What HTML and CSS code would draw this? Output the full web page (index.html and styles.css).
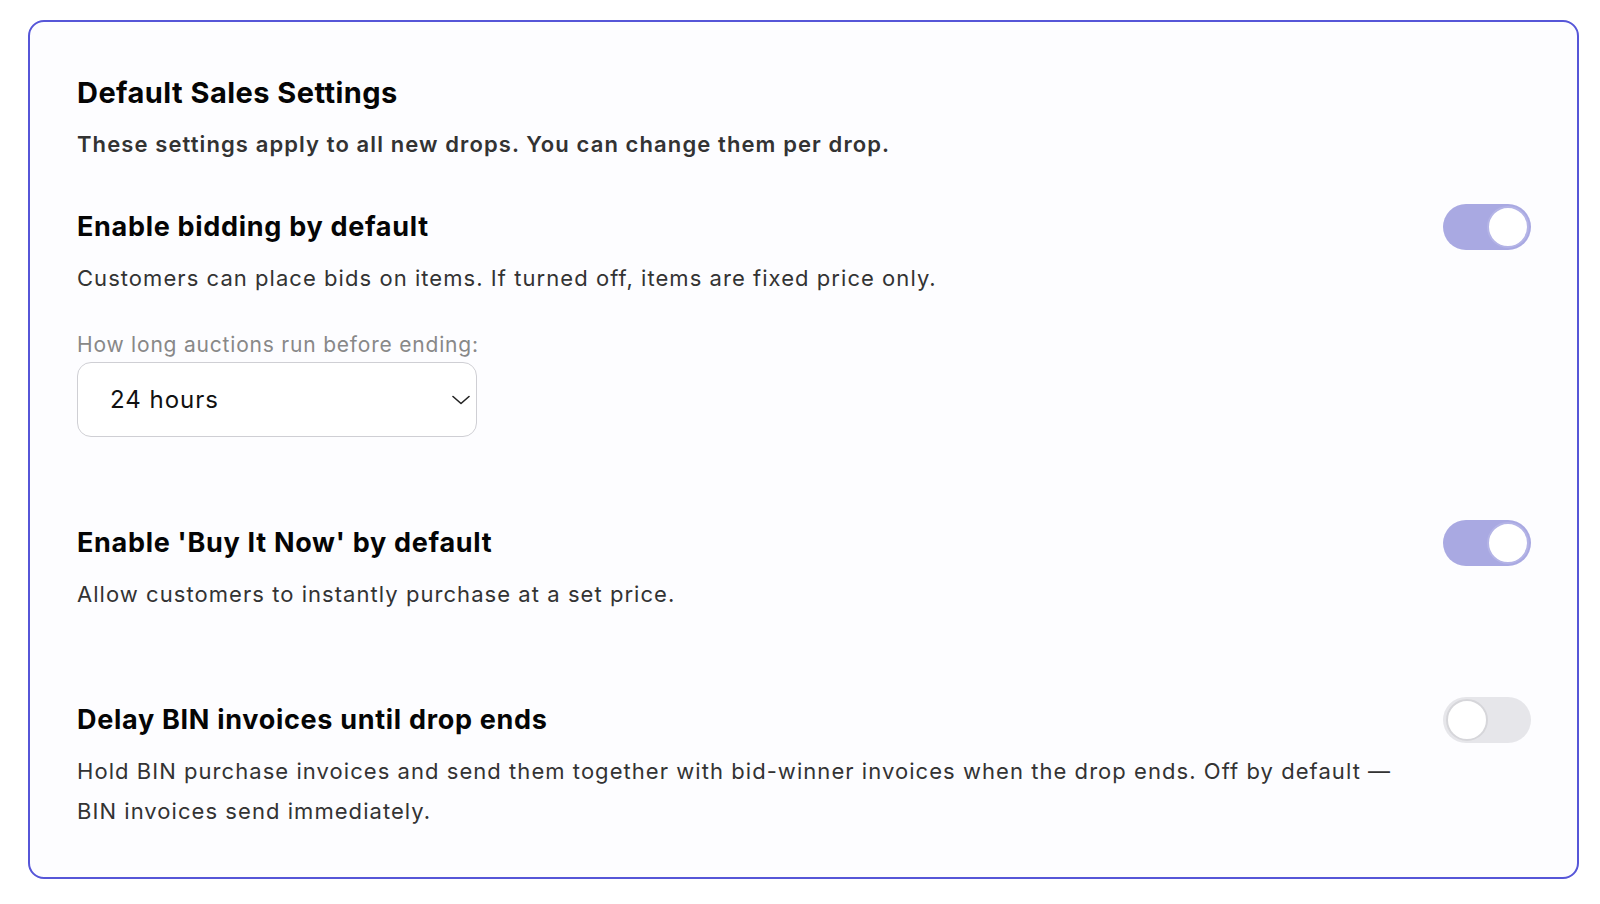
FILE: index.html
```html
<!DOCTYPE html>
<html>
<head>
    <title>Default Sales Settings</title>
    <link rel="stylesheet" href="styles.css">
</head>
<body>
    <div class="card">
        <h1>Default Sales Settings</h1>
        <p class="subtitle">These settings apply to all new drops. You can change them per drop.</p>

        <div class="setting first">
            <div class="setting-text">
                <h2>Enable bidding by default</h2>
                <p class="desc">Customers can place bids on items. If turned off, items are fixed price only.</p>

                <label class="field-label" for="duration">How long auctions run before ending:</label>
                <div class="select-wrap">
                    <select id="duration">
                        <option>12 hours</option>
                        <option selected>24 hours</option>
                        <option>48 hours</option>
                        <option>72 hours</option>
                    </select>
                    <svg class="chevron" width="18" height="10" viewBox="0 0 18 10">
                        <path d="M1 1.5 L9 8.5 L17 1.5" fill="none" stroke="#222" stroke-width="1.6" stroke-linecap="round" stroke-linejoin="round"/>
                    </svg>
                </div>
            </div>
            <div class="toggle on"><span class="knob"></span></div>
        </div>

        <div class="setting">
            <div class="setting-text">
                <h2>Enable 'Buy It Now' by default</h2>
                <p class="desc">Allow customers to instantly purchase at a set price.</p>
            </div>
            <div class="toggle on"><span class="knob"></span></div>
        </div>

        <div class="setting">
            <div class="setting-text">
                <h2>Delay BIN invoices until drop ends</h2>
                <p class="desc">Hold BIN purchase invoices and send them together with bid-winner invoices when the drop ends. Off by default — BIN invoices send immediately.</p>
            </div>
            <div class="toggle"><span class="knob"></span></div>
        </div>
    </div>
</body>
</html>
```

FILE: styles.css
```css
body {
    margin: 0;
    padding: 20px 21px 0 28px;
    background-color: #ffffff;
    font-family: Inter, Lato, sans-serif;
    color: #333;
}
.card {
    border: 2px solid #5656d8;
    border-radius: 16px;
    background-color: #fdfdff;
    padding: 53px 46px 46px 47px;
}
h1 {
    margin: 0;
    font-size: 29px;
    line-height: 36px;
    font-weight: 700;
    letter-spacing: 0.45px;
    color: #050505;
}
.subtitle {
    margin: 15px 0 0;
    font-size: 22px;
    line-height: 36px;
    font-weight: 600;
    letter-spacing: 1.1px;
    color: #333;
}
.setting {
    display: flex;
    align-items: flex-start;
    gap: 25px;
    margin-top: 88px;
}
.setting.first {
    margin-top: 47px;
}
.setting-text {
    flex: 1;
}
h2 {
    margin: 0;
    font-size: 27px;
    line-height: 36px;
    font-weight: 700;
    letter-spacing: 0.7px;
    color: #050505;
}
.desc {
    margin: 13px 0 0;
    font-size: 22px;
    line-height: 40px;
    letter-spacing: 1.05px;
    color: #333;
}
.field-label {
    display: block;
    margin-top: 32px;
    font-size: 21px;
    line-height: 30px;
    letter-spacing: 0.8px;
    color: #888;
}
.select-wrap {
    position: relative;
    width: 400px;
    margin-top: 2px;
}
select {
    appearance: none;
    -webkit-appearance: none;
    width: 100%;
    height: 75px;
    padding: 0 50px 0 32px;
    border: 1.5px solid #cfcfd4;
    border-radius: 14px;
    background-color: #fff;
    font-family: inherit;
    font-size: 24px;
    letter-spacing: 1px;
    color: #111;
}
.chevron {
    position: absolute;
    right: 7px;
    top: 33px;
    pointer-events: none;
}
.toggle {
    flex: none;
    position: relative;
    width: 88px;
    height: 46px;
    margin-top: -5px;
    border-radius: 23px;
    background-color: #e6e6ea;
}
.toggle.on {
    background-color: #a9a9e2;
}
.knob {
    position: absolute;
    top: 2px;
    left: 3px;
    width: 38px;
    height: 38px;
    border: 2px solid #d6d6da;
    border-radius: 50%;
    background-color: #fff;
}
.toggle.on .knob {
    left: auto;
    right: 2px;
    border-color: #b4b4e6;
}
```
